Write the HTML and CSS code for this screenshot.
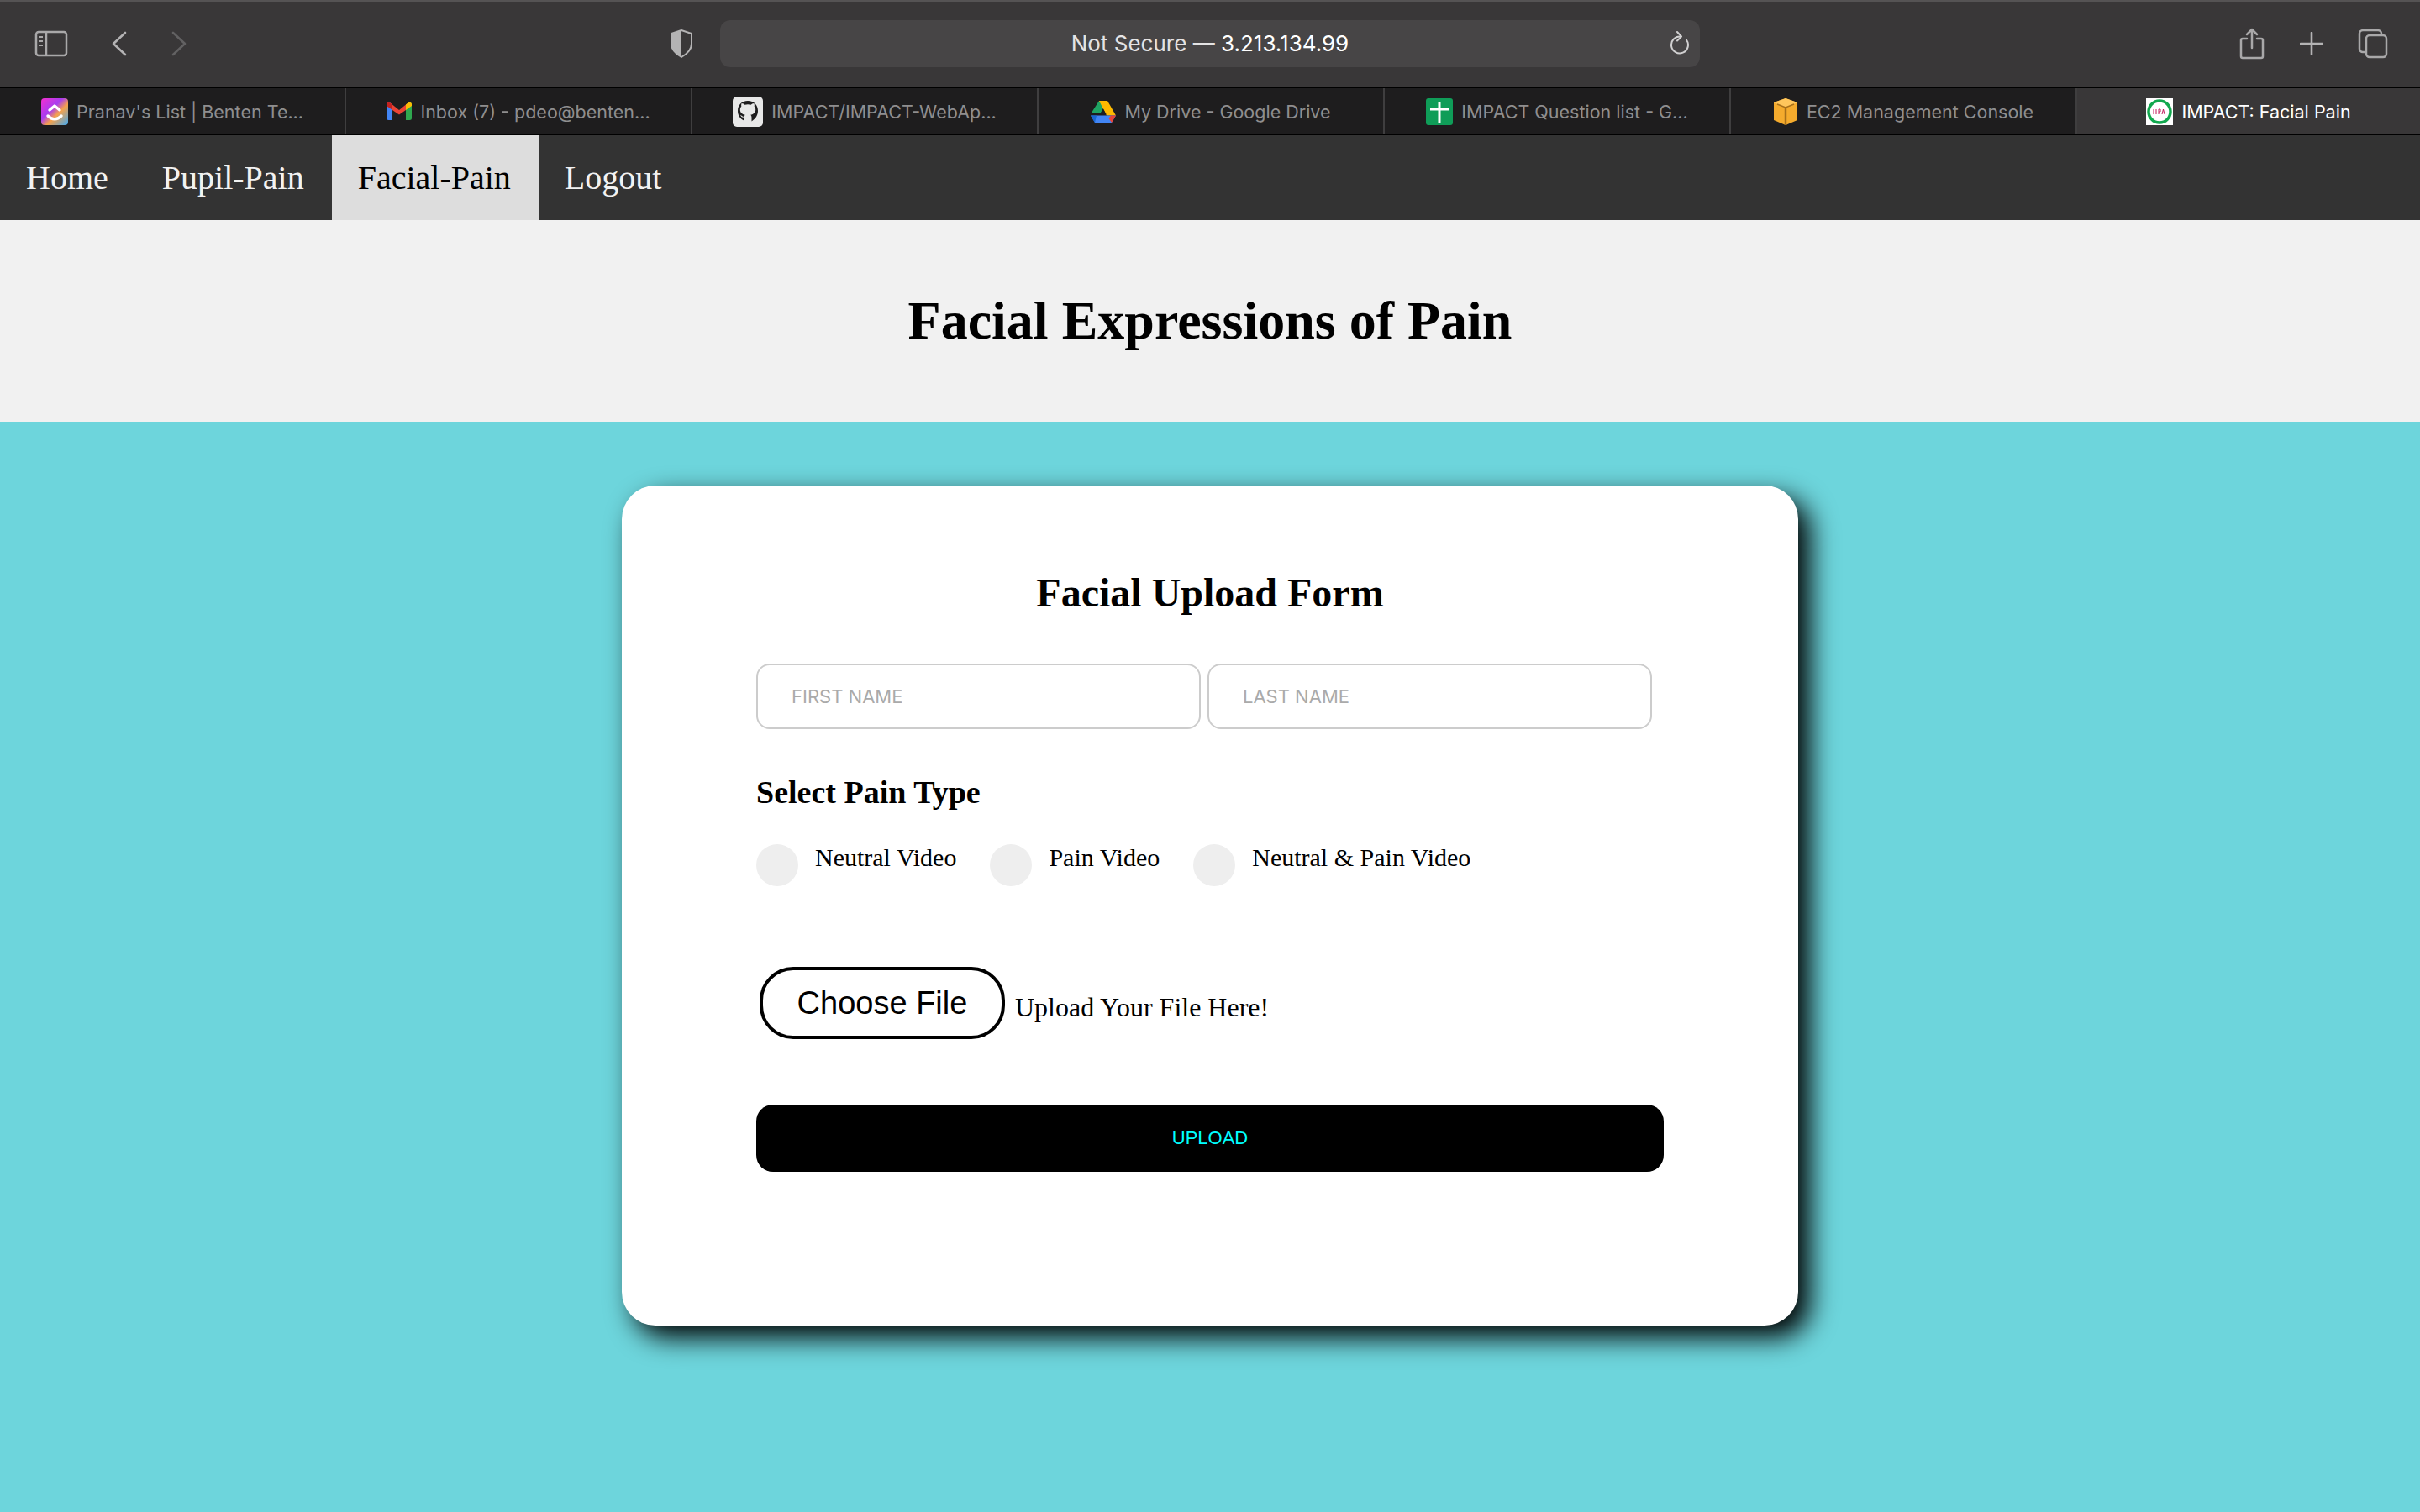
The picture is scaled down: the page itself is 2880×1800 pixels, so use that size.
FILE: index.html
```html
<!DOCTYPE html>
<html>

<head>
  <meta charset="utf-8">
  <title>IMPACT: Facial Pain</title>
  <link rel="stylesheet" href="styles.css">
</head>

<body>

  <div class="toolbar">
    <svg class="tool-icon sidebar-icon" width="40" height="32" viewBox="0 0 40 32" fill="none" stroke="#a9a8a9" stroke-width="2.5">
      <rect x="2" y="2" width="36" height="28" rx="3" />
      <path d="M14 2v28" />
      <path d="M6 8h4M6 13h4M6 18h4" stroke-width="2" />
    </svg>
    <svg class="tool-icon back-icon" width="18" height="30" viewBox="0 0 18 30" fill="none" stroke="#b4b3b4" stroke-width="2.6" stroke-linecap="round" stroke-linejoin="round">
      <path d="M16 2 2 15l14 13" />
    </svg>
    <svg class="tool-icon forward-icon" width="18" height="30" viewBox="0 0 18 30" fill="none" stroke="#626162" stroke-width="2.6" stroke-linecap="round" stroke-linejoin="round">
      <path d="M2 2l14 13L2 28" />
    </svg>
    <svg class="tool-icon shield-icon" width="28" height="34" viewBox="0 0 28 34">
      <path d="M14 1 2 5v12c0 7 5 12 12 16 7-4 12-9 12-16V5z" fill="none" stroke="#b4b3b4" stroke-width="2" />
      <path d="M14 1 2 5v12c0 7 5 12 12 16z" fill="#b4b3b4" />
    </svg>
    <div class="url-bar">
      <span class="url-text"><span class="url-dim">Not Secure — </span>3.213.134.99</span>
      <svg class="reload-icon" width="24" height="28" viewBox="0 0 24 28" fill="none" stroke="#d0cfd0" stroke-width="2" stroke-linecap="round" stroke-linejoin="round">
        <path d="M14 6.500a10 10 0 1 0 7 4" />
        <path d="M10 1l5 5.500-5 5" />
      </svg>
    </div>
    <svg class="tool-icon share-icon" width="30" height="38" viewBox="0 0 30 38" fill="none" stroke="#a9a8a9" stroke-width="2.5" stroke-linecap="round" stroke-linejoin="round">
      <path d="M9 13H4a2 2 0 0 0-2 2v19a2 2 0 0 0 2 2h22a2 2 0 0 0 2-2V15a2 2 0 0 0-2-2h-5" />
      <path d="M15 24V2M9 8l6-6 6 6" />
    </svg>
    <svg class="tool-icon plus-icon" width="28" height="28" viewBox="0 0 28 28" fill="none" stroke="#b4b3b4" stroke-width="2.6" stroke-linecap="round">
      <path d="M14 1v26M1 14h26" />
    </svg>
    <svg class="tool-icon copy-icon" width="36" height="36" viewBox="0 0 36 36" fill="none" stroke="#a9a8a9" stroke-width="2.5">
      <rect x="10" y="8" width="24" height="26" rx="4" />
      <path d="M10 28H6a4 4 0 0 1-4-4V6a4 4 0 0 1 4-4h18a4 4 0 0 1 4 4v2" />
    </svg>
  </div>

  <div class="tabs">
    <div class="tab">
      <svg class="favicon" width="32" height="32" viewBox="0 0 32 32">
        <defs>
          <linearGradient id="clickup" x1="0" y1="0" x2="1" y2="1">
            <stop offset="0" stop-color="#f52fd0" />
            <stop offset="0.4" stop-color="#a83cf0" />
            <stop offset="0.6" stop-color="#f7a24a" />
            <stop offset="1" stop-color="#3fa9f5" />
          </linearGradient>
        </defs>
        <rect width="32" height="32" rx="4" fill="url(#clickup)" />
        <path d="M10 14l6-5 6 5M8 21c5 5 11 5 16 0" fill="none" stroke="#fff" stroke-width="3.4" stroke-linecap="round" stroke-linejoin="round" />
      </svg>
      <span>Pranav's List | Benten Te...</span>
    </div>
    <div class="tab">
      <svg class="favicon" width="30" height="24" viewBox="0 0 30 24">
        <path d="M0 3.5C0 1 2.500 0 4.500 1.500L7 3.500V22H2.500A2.500 2.500 0 0 1 0 19.500z" fill="#4285f4" />
        <path d="M23 3.500l2.500-2C27.500 0 30 1 30 3.500v16a2.500 2.500 0 0 1-2.500 2.500H23z" fill="#2fa84f" />
        <path d="M4.500 1.500 15 10l10.500-8.500L23 10l-8 5.500L7 10z" fill="#ea4335" />
        <path d="M0 3.500C0 1 2.500 0 4.500 1.500L7 3.500v6.500L0 5z" fill="#c5221f" />
        <path d="M23 3.500l2.500-2C27.500 0 30 1 30 3.500V5l-7 5z" fill="#fbbc04" />
      </svg>
      <span>Inbox (7) - pdeo@benten...</span>
    </div>
    <div class="tab">
      <svg class="favicon" width="36" height="36" viewBox="0 0 36 36">
        <rect width="36" height="36" rx="5" fill="#e8e8e8" />
        <path d="M18 5C10.500 5 6 10 6 17c0 5.500 3 9.500 7.500 11.500V24.500c-2.500.5-3.500-.5-4.500-2.500 2 .5 2.500 2 4.500 2 .2-1 .7-1.800 1.300-2.300C11 21 8.800 19 8.800 15.500c0-1.500.5-2.800 1.500-3.800-.2-1-.2-2.400.3-3.700 1.500 0 3 1 3.800 1.700 2.400-.7 4.800-.7 7.200 0 .8-.7 2.300-1.700 3.800-1.700.5 1.300.5 2.700.3 3.700 1 1 1.500 2.300 1.500 3.800 0 3.500-2.200 5.500-6 6.200.8.700 1.300 1.700 1.300 3.300v4.500C27 26.500 30 22.500 30 17 30 10 25.500 5 18 5z" fill="#1d1c1d" />
      </svg>
      <span>IMPACT/IMPACT-WebAp...</span>
    </div>
    <div class="tab">
      <svg class="favicon" width="30" height="26" viewBox="0 0 30 26">
        <path d="M10 0h10L12 14H1z" fill="#1fa463" />
        <path d="M20 0l10 17.500H19L10 0z" fill="#ffba00" />
        <path d="M0 17.500h30L25 26H5z" fill="#4285f4" />
        <path d="M24 17.500h6L25 26l-3.500-5z" fill="#ea4335" />
        <path d="M0 17.500h7L5 26z" fill="#1967d2" />
        <path d="M15 9.500l3.500 6.500h-7z" fill="#1e1d1e" />
      </svg>
      <span>My Drive - Google Drive</span>
    </div>
    <div class="tab">
      <svg class="favicon" width="32" height="32" viewBox="0 0 32 32">
        <rect width="32" height="32" rx="3" fill="#0f9d58" />
        <path d="M16 5v24M5 13h22" fill="none" stroke="#fff" stroke-width="3" />
      </svg>
      <span>IMPACT Question list - G...</span>
    </div>
    <div class="tab">
      <svg class="favicon" width="30" height="32" viewBox="0 0 30 32">
        <path d="M15 0 29 5v21l-14 6-14-6V5z" fill="#f5ab2d" />
        <path d="M1 5l14 6 14-6-14-5z" fill="#ffc65c" />
        <path d="M15 11v21" stroke="#a8701a" stroke-width="2.500" />
        <path d="M5 7l10 4 10-4" fill="none" stroke="#a8701a" stroke-width="1.500" />
      </svg>
      <span>EC2 Management Console</span>
    </div>
    <div class="tab tab-active">
      <svg class="favicon" width="32" height="32" viewBox="0 0 32 32">
        <rect width="32" height="32" fill="#fff" />
        <circle cx="16" cy="16" r="13" fill="none" stroke="#12a84e" stroke-width="3.500" />
        <path d="M9 13v6M12 13v6M15 19v-6h2v3h-2M19 19l1.500-6 1.500 6" fill="none" stroke="#c2185b" stroke-width="1" />
      </svg>
      <span>IMPACT: Facial Pain</span>
    </div>
  </div>

  <nav class="topnav">
    <a href="#">Home</a>
    <a href="#">Pupil-Pain</a>
    <a href="#" class="active">Facial-Pain</a>
    <a href="#">Logout</a>
  </nav>

  <div class="header">
    <h1>Facial Expressions of Pain</h1>
  </div>

  <div class="content">
    <form class="card">
      <h2>Facial Upload Form</h2>

      <div class="name-row">
        <input type="text" placeholder="FIRST NAME">
        <input type="text" placeholder="LAST NAME">
      </div>

      <h3>Select Pain Type</h3>

      <div class="radio-row">
        <label class="radio-item"><span class="radio"></span>Neutral Video</label>
        <label class="radio-item"><span class="radio"></span>Pain Video</label>
        <label class="radio-item"><span class="radio"></span>Neutral &amp; Pain Video</label>
      </div>

      <div class="file-row">
        <button type="button" class="file-btn">Choose File</button>
        <span class="file-text">Upload Your File Here!</span>
      </div>

      <button type="submit" class="upload-btn">UPLOAD</button>
    </form>
  </div>

</body>

</html>
```

FILE: styles.css
```css
* {
  box-sizing: border-box;
}

body {
  margin: 0;
  height: 1800px;
  display: flex;
  flex-direction: column;
  font-family: "Liberation Serif", serif;
  background-color: #6dd5dc;
  overflow: hidden;
}

/* browser chrome */
.toolbar {
  height: 104px;
  padding-bottom: 2px;
  display: flex;
  align-items: center;
  background-color: #393738;
  border-top: 2px solid #555354;
}

.tool-icon {
  flex: none;
}

.sidebar-icon {
  margin-left: 41px;
}

.back-icon {
  margin-left: 52px;
}

.forward-icon {
  margin-left: 53px;
}

.shield-icon {
  margin-left: 575px;
}

.url-bar {
  width: 1166px;
  height: 56px;
  margin-left: 32px;
  padding-bottom: 2px;
  position: relative;
  display: flex;
  align-items: center;
  justify-content: center;
  border-radius: 12px;
  background-color: #474546;
}

.url-text {
  font-family: Inter, sans-serif;
  font-size: 26px;
  color: #fff;
}

.url-dim {
  color: #e4e3e4;
}

.reload-icon {
  position: absolute;
  right: 13px;
  top: 13px;
}

.share-icon {
  margin-left: 642px;
}

.plus-icon {
  margin-left: 42px;
}

.copy-icon {
  margin-left: 41px;
}

.tabs {
  height: 57px;
  display: grid;
  grid-template-columns: repeat(6, 412px) 1fr;
  background-color: #1e1d1e;
  border-top: 1px solid #000;
  border-bottom: 1px solid #000;
}

.tab {
  display: flex;
  align-items: center;
  justify-content: center;
  gap: 10px;
  border-right: 2px solid #3f3e3f;
  font-family: Inter, sans-serif;
  font-size: 21.5px;
  color: #8f8e8f;
  white-space: nowrap;
}

.tab-active {
  border-right: none;
  background-color: #393738;
  color: #fff;
}

.favicon {
  flex: none;
}

/* page nav */
.topnav {
  height: 101px;
  display: flex;
  background-color: #333;
}

.topnav a {
  padding: 27px 33px 29px 31px;
  font-size: 40px;
  color: #f2f2f2;
  text-decoration: none;
}

.topnav a.active {
  background-color: #ddd;
  color: #000;
}

.header {
  height: 240px;
  display: flex;
  align-items: center;
  justify-content: center;
  background-color: #f1f1f1;
}

.header h1 {
  margin: 0;
  font-size: 64px;
  color: #000;
}

.content {
  flex: 1;
  padding-top: 76px;
}

.card {
  width: 1400px;
  height: 1000px;
  margin: 0 auto;
  padding: 100px 160px 0;
  border-radius: 40px;
  background-color: #fff;
  box-shadow: 14px 14px 32px #000;
}

.card h2 {
  margin: 0 0 56px;
  text-align: center;
  font-size: 48px;
  line-height: 56px;
}

.name-row {
  display: flex;
  gap: 8px;
}

.name-row input {
  width: 529px;
  height: 78px;
  padding: 0 40px;
  border: 2px solid #ccc;
  border-radius: 16px;
  font-family: Inter, sans-serif;
  font-size: 22px;
}

.name-row input::placeholder {
  color: #aaa;
}

.card h3 {
  margin: 52px 0 0;
  font-size: 38px;
  line-height: 46px;
}

.radio-row {
  display: flex;
  gap: 40px;
  margin-top: 39px;
}

.radio-item {
  display: flex;
  gap: 20px;
  font-size: 30px;
  line-height: 32px;
}

.radio {
  width: 50px;
  height: 50px;
  border-radius: 50%;
  background-color: #eee;
}

.file-row {
  display: flex;
  align-items: center;
  gap: 12px;
  margin-top: 96px;
  padding-left: 4px;
}

.file-btn {
  width: 292px;
  height: 86px;
  padding: 0;
  border: 4px solid #000;
  border-radius: 40px;
  background-color: #fff;
  font-family: "Liberation Sans", sans-serif;
  font-size: 38px;
  color: #000;
}

.file-text {
  font-size: 32px;
  margin-top: 10px;
}

.upload-btn {
  display: block;
  width: 1080px;
  height: 80px;
  margin-top: 78px;
  border: none;
  border-radius: 20px;
  background-color: #000;
  font-family: "Liberation Sans", sans-serif;
  font-size: 22px;
  color: #0ff;
}
```
